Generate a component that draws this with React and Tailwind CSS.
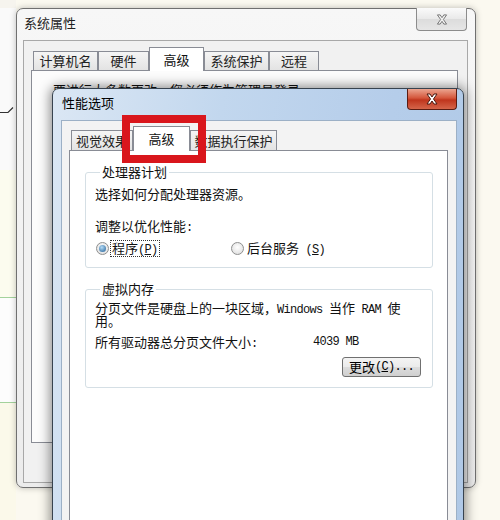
import clsx from "clsx";

// ascii bits in the old dialogs are half width, so a mono face fits best
function Mono({ children }) {
  return (
    <span className="font-['Liberation_Mono',monospace] text-[12px] leading-none tracking-[-0.7px]">
      {children}
    </span>
  );
}

function XMark({ fill, stroke, width = 14, height = 12 }) {
  return (
    <svg width={width} height={height} viewBox="0 0 14 12">
      <path
        d="M2 1h3l2 3 2-3h3L8.5 6 12 11H9L7 8 5 11H2l3.5-5z"
        fill={fill}
        stroke={stroke}
        strokeWidth="1"
        strokeLinejoin="round"
      />
    </svg>
  );
}

function Tab({ label, size, active }) {
  return (
    <div
      className={clsx(
        "flex shrink-0 items-center justify-center border border-b-0 border-[#898c95] leading-[14px]",
        size,
        active
          ? "relative z-10 -mb-px bg-white"
          : "bg-[linear-gradient(#f5f5f5,#e3e3e3)] text-[#222]"
      )}
    >
      {label}
    </div>
  );
}

function Radio({ checked }) {
  return (
    <span className="flex h-[13px] w-[13px] shrink-0 items-center justify-center rounded-full border border-[#8e8f8f] bg-[radial-gradient(circle_at_50%_40%,#ffffff,#d9d9d9)]">
      {checked && (
        <span className="h-[7px] w-[7px] rounded-full bg-[radial-gradient(circle_at_40%_35%,#b5dcf7,#1d5c93)]" />
      )}
    </span>
  );
}

function BackDialog() {
  return (
    <div className="absolute left-[16px] top-[8px] flex h-[480px] w-[460px] flex-col rounded-[7px] border border-[#707070] bg-[linear-gradient(#f7f7f7,#ececec)] shadow-[0_0_6px_rgba(0,0,0,0.25)]">
      <div className="flex h-[31px] items-start">
        <span className="ml-[7px] mt-[5px] leading-[18px] text-[#1e1e1e]">
          系统属性
        </span>
        <div className="-mt-px ml-auto mr-[8px] flex h-[23px] w-[51px] items-center justify-center rounded-b-[4px] border border-t-0 border-[#8c8c8c] bg-[linear-gradient(#fafafa,#e9e9e9_50%,#dcdcdc_51%,#e6e6e6)]">
          <XMark fill="#f4f4f4" stroke="#6d6d6d" width={14} height={11} />
        </div>
      </div>
      <div className="mb-[4px] ml-[6px] mr-[7px] flex flex-1 flex-col border border-[#a8a8a8] bg-[#f1f1f1] pb-[39px] pl-[7px] pr-[9px] pt-[6px]">
        <div className="ml-[2px] flex h-[23px] items-end">
          <Tab label="计算机名" size="w-[65px] h-[19px]" />
          <Tab label="硬件" size="w-[51px] h-[19px]" />
          <Tab label="高级" size="w-[55px] h-[24px]" active />
          <Tab label="系统保护" size="w-[65px] h-[19px]" />
          <Tab label="远程" size="w-[50px] h-[19px]" />
        </div>
        <div className="flex-1 border border-[#898c95] bg-[#fcfcfc] pl-[21px] pt-[12px] leading-[14px]">
          要进行大多数更改，您必须作为管理员登录。
        </div>
      </div>
    </div>
  );
}

function FrontDialog() {
  return (
    <div className="absolute left-[52px] top-[88px] flex h-[460px] w-[412px] flex-col rounded-t-[7px] border border-[#37434f] bg-[linear-gradient(100deg,#dbe7f4,#c2d7ee_35%,#b5cdea_70%,#afc8e6)] shadow-[0_0_12px_2px_rgba(0,0,0,0.45)]">
      <div className="flex h-[31px] items-start">
        <span className="ml-[9px] mt-[5px] leading-[18px] text-black">
          性能选项
        </span>
        <div className="ml-auto mr-[6px] flex h-[21px] w-[50px] items-center justify-center rounded-b-[4px] border border-t-0 border-[#5a1c12] bg-[linear-gradient(#eba590,#d4563b_45%,#bf351d_55%,#d5654a)]">
          <XMark fill="#ffffff" stroke="#4a1a10" width={14} height={12} />
        </div>
      </div>
      <div className="ml-[8px] mr-[6px] flex flex-1 flex-col border border-[#9cb0c6] bg-[#f3f3f3] pl-[7px] pr-[8px] pt-[5px]">
        <div className="ml-[2px] flex h-[24px] items-end">
          <Tab label="视觉效果" size="w-[62px] h-[20px]" />
          <Tab label="高级" size="w-[57px] h-[25px]" active />
          <Tab label="数据执行保护" size="w-[87px] h-[20px]" />
        </div>
        <div className="flex flex-1 flex-col border border-[#898c95] bg-white pl-[15px]">
          <fieldset className="mt-[14px] w-[348px] rounded-[3px] border border-[#d5dfe5] pb-[12px] pl-[9px] leading-[14px]">
            <legend className="ml-[5px] h-[14px] px-[2px] leading-[14px]">
              处理器计划
            </legend>
            <div className="mt-[8px] h-[14px]">选择如何分配处理器资源。</div>
            <div className="mt-[18px] h-[14px]">
              调整以优化性能<Mono>:</Mono>
            </div>
            <div className="mt-[8px] flex h-[14px] items-center">
              <div className="ml-[1px] flex w-[135px] items-center">
                <Radio checked />
                <span className="ml-[1px] border border-dotted border-[#333] px-[1px] leading-[13px]">
                  程序
                  <Mono>
                    (<u>P</u>)
                  </Mono>
                </span>
              </div>
              <div className="flex items-center">
                <Radio />
                <span className="ml-[3px]">
                  后台服务
                  <Mono>
                    {" "}(<u>S</u>)
                  </Mono>
                </span>
              </div>
            </div>
          </fieldset>

          <fieldset className="mt-[14px] flex w-[348px] flex-col rounded-[3px] border border-[#d5dfe5] pb-[10px] pl-[9px] leading-[13px]">
            <legend className="ml-[5px] h-[14px] px-[2px] leading-[14px]">
              虚拟内存
            </legend>
            <div className="mt-[5px] h-[13px] whitespace-nowrap">
              分页文件是硬盘上的一块区域，<Mono>Windows </Mono>当作
              <Mono> RAM </Mono>使
            </div>
            <div className="h-[13px]">用。</div>
            <div className="mt-[8px] flex h-[14px] items-center">
              <span className="w-[218px]">
                所有驱动器总分页文件大小<Mono>:</Mono>
              </span>
              <Mono>4039 MB</Mono>
            </div>
            <button className="mr-[11px] mt-[8px] flex h-[20px] w-[79px] items-center justify-center self-end rounded-[3px] border border-[#707070] bg-[linear-gradient(#f4f4f4,#ebebeb_50%,#dddddd_51%,#cfcfcf)] leading-[14px] text-black">
              更改
              <Mono>
                (<u>C</u>)...
              </Mono>
            </button>
          </fieldset>
        </div>
      </div>
    </div>
  );
}

export default function App() {
  return (
    <div className="relative h-[520px] w-[500px] overflow-hidden bg-[#fbf9f0] font-['Noto_Sans_CJK_SC','Noto_Sans',sans-serif] text-[13px] text-[#111]">
      {/* bit of the spreadsheet behind the windows */}
      <div className="absolute left-0 top-0 flex h-full w-[16px] flex-col">
        <div className="h-[8px] bg-[#f6f4ee]" />
        <div className="h-[162px] bg-[#fafafa]" />
        <div className="h-[128px] border-b border-[#a3d29c] bg-[#fcfcef]" />
        <div className="h-[105px] border-b border-[#a3d29c] bg-[#fdfdfd]" />
        <div className="flex-1 bg-[#fbf9ea]" />
      </div>
      <svg
        className="absolute left-0 top-[104px]"
        width="16"
        height="16"
        viewBox="0 0 16 16"
      >
        <path d="M0 8.5H8L13 3.5" stroke="#333" fill="none" strokeWidth="1.2" />
      </svg>

      <BackDialog />
      <FrontDialog />

      {/* red annotation box round the tab */}
      <div className="absolute left-[122px] top-[115px] h-[48px] w-[84px] border-[8px] border-[#d9161c]" />
    </div>
  );
}
